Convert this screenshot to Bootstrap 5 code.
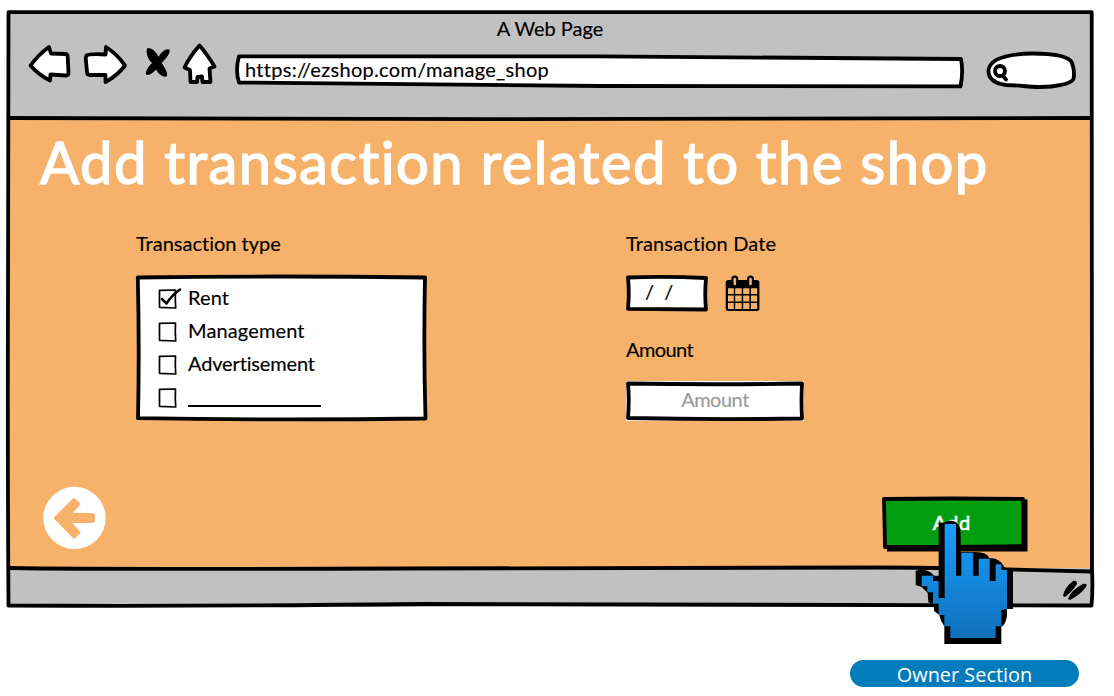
<!DOCTYPE html>
<html lang="en">
<head>
<meta charset="utf-8">
<meta name="viewport" content="width=device-width, initial-scale=1">
<title>A Web Page</title>
<link href="https://cdn.jsdelivr.net/npm/bootstrap@5.3.0/dist/css/bootstrap.min.css" rel="stylesheet">
<style>
body{font-family:Lato,"Open Sans",sans-serif;font-size:20px;line-height:24px;color:#000;background:#fff;overflow:hidden;font-variant-ligatures:none;-webkit-text-stroke:.15px currentColor}
svg{display:block;flex:none}
.ink{fill:none;stroke:#000;stroke-width:3.8;stroke-linecap:round;stroke-linejoin:round}
.thin{stroke-width:1.7}
.paper{fill:#fff}
.frame-win{width:1086px;height:596px;margin:11px 0 0 7px;background:#c1c1c1}
.layer{position:absolute;left:0;top:0;pointer-events:none;overflow:visible}
.top-bar{height:108px;padding-top:5px}
.win-title{height:26px}
.tools{padding-left:21px}
.address{width:746px;height:44px;padding:15px 0 0 19px}
.address span{letter-spacing:.3px}
.page-area{height:449px;background:#f6b26b;padding:8px 0 0 33px}
.page-title{font-size:58px;line-height:70px;font-weight:400;color:#fff;-webkit-text-stroke:1.4px #fff;letter-spacing:1.43px;margin:0;white-space:nowrap}
.form-cols{padding:34px 0 0 96px}
.col-type{width:490px}
.col-date{width:300px}
.roomy{letter-spacing:.13px}
.type-box{width:291px;height:145px;margin-top:20px;padding:10px 0 0 20px}
.opt{height:33px}
.opt svg{margin:-1px 6px 0 0}
.tight{letter-spacing:-.15px}
.blank{width:133px;height:2px;background:#000;margin-bottom:10px}
.date-row{margin-top:20px}
.date-box{width:82px;height:37px;padding:4px 0 0 19px;word-spacing:5px}
.amount-label{margin-top:25px;letter-spacing:-.6px}
.amount-box{width:178px;height:40px;margin-top:20px;background:#fff;color:#999;padding-top:6px;letter-spacing:-.5px}
.actions{padding:65px 66px 0 2px}
.add-btn{width:145px;height:55px;margin-top:11px;padding:13px 5px 0 0;color:#fff;-webkit-text-stroke:.6px #fff;letter-spacing:.9px}
.hand{position:absolute;left:32px;top:22px}
.owner{font-family:"Open Sans","Noto Sans",sans-serif;width:229px;height:27px;line-height:29px;margin:53px 0 0 850px;background:#047bba;color:#fff;font-size:19.9px;-webkit-text-stroke:0}
</style>
</head>
<body>
<main class="frame-win position-relative">
  <svg class="layer" width="1086" height="596" viewBox="7 11 1086 596"><g class="ink"><path d="M8.500 12.200Q550 11 1091.700 12.200Q1091.500 300 1092 570Q1093 590 1091.500 605.500Q700 603.500 420 604Q200 606.500 8.500 605.500Q7.500 450 8 300Z"/><path d="M9 118Q200 119 500 119.200Q800 118 1091 118M9 568Q100 569.500 400 568.500L880 567.500Q990 568.500 1091 571.500"/></g><path d="M1063 596Q1064 588 1073 581Q1077 580 1077 584Q1072 592 1065 597ZM1068 599Q1071 590 1083 584Q1088 583 1086 587Q1080 595 1070 600Z"/></svg>
  <header class="top-bar">
    <div class="win-title text-center">A Web Page</div>
    <nav class="tools d-flex">
      <svg width="50" height="44" viewBox="28 42 50 44"><path class="ink paper" d="M30.500 65.500C36 58 42 52 49 47L51 53.500L65.500 54Q67.500 54 67.700 57L68.500 73Q68.500 75.500 66 75.500L50.500 74.500L50 80.500C43 77 36 72 30.500 65.500Z"/></svg>
      <svg width="60" height="44" viewBox="78 42 60 44"><path class="ink paper" d="M86.500 55.500Q90 53.500 105.500 54.500L106 47Q117 54 125 65.500Q117 76 105.500 82L105.500 75L90 75Q87 75 87 72L85.700 58Z"/></svg>
      <svg width="40" height="44" viewBox="138 42 40 44"><path d="M147.500 48C153 48 157 53 158.500 57C161 52 166 48 169.500 49.500C171 53 165 60 161.500 63C164 66 169 74 166.500 76.500C162 77.500 158 73 156 69.500C153 73 149 76 146 74.500C145 71 149 66 152 63C148 60 145 51 147.500 48Z"/></svg>
      <svg width="48" height="44" viewBox="178 42 48 44"><path class="ink paper" d="M199.500 45.500Q207 54 214.500 66.500L209.500 68.500L210.500 82L202.500 82L202 76.500L197.500 77L197 82L190.500 82L190 70L184.500 67.500Q190 56 199.500 45.500Z"/></svg>
      <div class="address position-relative">
        <svg class="layer" width="746" height="44" viewBox="226 42 746 44"><path class="ink paper" d="M239 56.300L600 56.300L961 59Q963.500 72 960.500 86.300L600 86L239 82.500Q235 70 239 56.300Z"/></svg>
        <span class="position-relative">https://ezshop.com/manage_shop</span>
      </div>
      <svg width="110" height="44" viewBox="972 42 110 44" overflow="visible"><path class="ink paper" d="M1006 85C993 83 988 77 988.500 70C990 59 1005 54 1032 53.500C1050 53.500 1069 55 1072 63Q1075 71 1073.500 79C1071 84 1055 87 1040 87C1028 87 1018 85 1006 85Z"/><ellipse class="ink" cx="1000" cy="71" rx="5" ry="5"/><path class="ink" d="M1003 76L1006 79.500"/></svg>
    </nav>
  </header>
  <section class="page-area">
    <h1 class="page-title">Add transaction related to the shop</h1>
    <form class="form-cols d-flex">
      <div class="col-type">
        <div>Transaction type</div>
        <div class="type-box position-relative">
          <svg class="layer" width="291" height="145" viewBox="136 275 291 145"><path class="ink paper" d="M137.800 277.500Q280 275.500 425 277.500Q423.500 350 425.500 418.500Q280 420.500 138 418.200Q139.500 350 137.800 277.500Z"/></svg>
          <div class="opt d-flex position-relative"><svg width="26" height="27" viewBox="156 284 26 27"><path class="ink thin" d="M159.500 290.300L175.500 290Q175 299 175.700 308L159.500 307.300Z"/><path class="ink" style="stroke-width:2.5" d="M162 299L166.500 303.500Q172 295 180 289.500"/></svg><span class="roomy">Rent</span></div>
          <div class="opt d-flex position-relative"><svg width="26" height="27" viewBox="156 284 26 27"><path class="ink thin" d="M159.500 290.300L175.500 290Q175 299 175.700 308L159.500 307.300Z"/></svg><span class="roomy">Management</span></div>
          <div class="opt d-flex position-relative"><svg width="26" height="27" viewBox="156 284 26 27"><path class="ink thin" d="M159.500 290.300L175.500 290Q175 299 175.700 308L159.500 307.300Z"/></svg><span class="tight">Advertisement</span></div>
          <div class="opt d-flex position-relative"><svg width="26" height="27" viewBox="156 284 26 27"><path class="ink thin" d="M159.500 290.300L175.500 290Q175 299 175.700 308L159.500 307.300Z"/></svg><span class="blank mt-auto"></span></div>
        </div>
      </div>
      <div class="col-date">
        <div class="roomy">Transaction Date</div>
        <div class="date-row d-flex">
          <div class="date-box position-relative">
            <svg class="layer" width="82" height="37" viewBox="626 275 82 37"><path class="ink paper" d="M628 277.500Q665 276 706 278Q704.500 295 706 309.500Q665 309 628 308.800Q629.500 294 628 277.500Z"/></svg>
            <span class="position-relative">/ /</span>
          </div>
          <svg width="52" height="37" viewBox="708 275 52 37"><rect x="725.700" y="280" width="33.700" height="31" rx="2.500"/><path fill="#f6b26b" d="M728 288.200h5.800v5.800h-5.800zM735.200 288.200h6.500v5.800h-6.500zM743.200 288.200h6.200v5.800h-6.200zM750.900 288.200h6.300v5.800h-6.300zM728 295.500h5.800v6h-5.800zM735.200 295.500h6.500v6h-6.500zM743.200 295.500h6.200v6h-6.200zM750.900 295.500h6.300v6h-6.300zM728 303h5.800v6h-5.800zM735.200 303h6.500v6h-6.500zM743.200 303h6.200v6h-6.200zM750.900 303h6.300v6h-6.300z"/><path stroke="#000" stroke-width="7" stroke-linecap="round" d="M734.800 279v4M750.500 279v4"/><path stroke="#f6b26b" stroke-width="2.600" stroke-linecap="round" d="M734.800 279v5M750.500 279v5"/></svg>
        </div>
        <div class="amount-label">Amount</div>
        <div class="amount-box position-relative text-center">
          <svg class="layer" width="178" height="40" viewBox="626 381 178 40"><path class="ink" d="M628 383.500Q715 385 802 383.500Q801 402 802 418.500Q715 420 628 418Q629.500 400 628 383.500Z"/></svg>
          <span>Amount</span>
        </div>
      </div>
    </form>
    <div class="actions d-flex justify-content-between">
      <svg width="65" height="65" viewBox="42 486 65 65"><circle cx="74.500" cy="518" r="31.200" fill="#fff"/><path fill="#f6b26b" stroke="#f6b26b" stroke-width="3" stroke-linejoin="round" d="M55.500 518L74 499.500L79 504L69 514.500H92Q93.500 514.500 93.500 516V520Q93.500 521.500 92 521.500H69L79 532.500L74 537Z"/></svg>
      <div class="add-btn position-relative text-center">
        <svg class="layer" width="145" height="55" viewBox="882 498 145 55"><path d="M887 500.500H1027.500V552.500H887Z"/><path class="ink" style="fill:#039d10" d="M884 500Q950 499 1023 500V547Q950 548 885 548Z"/></svg>
        <span class="position-relative">Add</span>
        <svg class="hand" width="100" height="126" viewBox="162 120 300 378"><defs><linearGradient id="skin" x1="0" y1="0" x2="0" y2="1"><stop offset="0" stop-color="#189dff"/><stop offset="1" stop-color="#0f70bb"/></linearGradient></defs><path d="M236 132L255 130Q268 122 286 128Q302 138 302 165V219H345Q382 219 388 238H398Q418 240 430 260L441 273H459V390H441V410Q438 430 428 442H424V495H253V442Q241 425 238 408L222 396V376L205 370L203 342L185 324L167 318V275L185 271Q211 275 222 290H236Z"/><path fill="url(#skin)" d="M254 135H288V290H304V221H339V290H356V239H389V306H407V256H424V273H441V390L424 393V442H407V477H271V442H253V408H236V374H219V340H202V322H185V290H219V306H236V357H254Z"/></svg>
      </div>
    </div>
  </section>
</main>
<footer class="owner rounded-pill text-center">Owner Section</footer>
<script src="https://cdn.jsdelivr.net/npm/bootstrap@5.3.0/dist/js/bootstrap.bundle.min.js"></script>
</body>
</html>
